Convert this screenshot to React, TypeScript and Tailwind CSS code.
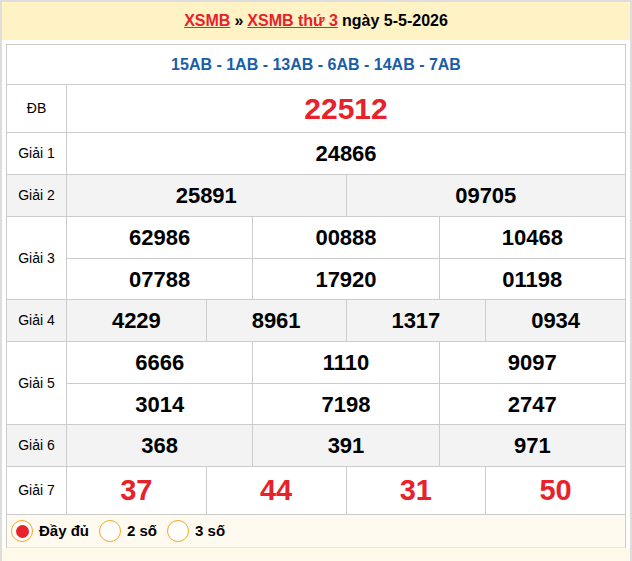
const F = { fontFamily: '"Liberation Sans", Arial, sans-serif' }

function Row({ label, nums, bg = 'bg-white', h = 'h-[41px]', num = 'text-[22px] text-black' }: { label: string; nums: string[][]; bg?: string; h?: string; num?: string }) {
  return (
    <div className={`flex border-t border-[#ccc] ${bg}`}>
      <div className="w-[60px] shrink-0 flex items-center justify-center text-[14px] text-black border-r border-[#ccc]">{label}</div>
      <div className="flex-1 flex flex-col">
        {nums.map((r, i) => (
          <div key={i} className={`flex ${h} ${i > 0 ? 'border-t border-[#ccc]' : ''}`}>
            {r.map((n, j) => (
              <div key={j} className={`flex-1 flex items-center justify-center font-bold ${num} ${j > 0 ? 'border-l border-[#ccc]' : ''}`}>{n}</div>
            ))}
          </div>
        ))}
      </div>
    </div>
  )
}

export default function App() {
  return (
    <div style={F} className="w-[632px] h-[561px] bg-[#fff9ea] border-x-2 border-[#ddd] border-t-2 overflow-hidden">
      <div className="h-[38px] bg-[#fff2c4] flex items-center justify-center text-[16px] font-bold text-black gap-1">
        <span className="text-[#e8212a] underline">XSMB</span>
        <span>»</span>
        <span className="text-[#e8212a] underline">XSMB thứ 3</span>
        <span>ngày 5-5-2026</span>
      </div>
      <div className="bg-white px-[4px] pt-[4px]">
        <div className="border border-[#ccc] border-b-0">
          <div className="h-[39px] flex items-center justify-center text-[16px] font-bold text-[#1a5ea8]">15AB - 1AB - 13AB - 6AB - 14AB - 7AB</div>
          <Row label="ĐB" nums={[['22512']]} h="h-[47px]" num="text-[30px] text-[#e8212a]" />
          <Row label="Giải 1" nums={[['24866']]} />
          <Row label="Giải 2" bg="bg-[#f3f3f3]" nums={[['25891', '09705']]} />
          <Row label="Giải 3" nums={[['62986', '00888', '10468'], ['07788', '17920', '01198']]} />
          <Row label="Giải 4" bg="bg-[#f3f3f3]" nums={[['4229', '8961', '1317', '0934']]} />
          <Row label="Giải 5" nums={[['6666', '1110', '9097'], ['3014', '7198', '2747']]} />
          <Row label="Giải 6" bg="bg-[#f3f3f3]" nums={[['368', '391', '971']]} />
          <Row label="Giải 7" h="h-[47px]" num="text-[29px] text-[#e8212a]" nums={[['37', '44', '31', '50']]} />
          <div className="h-[34px] border-t border-b border-[#ccc] border-b-[#f5e6c8] bg-[#fffaf0] flex items-center gap-[6px] px-[4px] text-[15px] font-bold text-black">
            <span className="w-[22px] h-[22px] rounded-full border border-[#f5a623] bg-white flex items-center justify-center"><span className="w-[13px] h-[13px] rounded-full bg-[#e8212a]" /></span>
            <span className="mr-1">Đầy đủ</span>
            <span className="w-[22px] h-[22px] rounded-full border border-[#f5a623] bg-white" />
            <span className="mr-1">2 số</span>
            <span className="w-[22px] h-[22px] rounded-full border border-[#f5a623] bg-white" />
            <span>3 số</span>
          </div>
        </div>
      </div>
    </div>
  )
}
